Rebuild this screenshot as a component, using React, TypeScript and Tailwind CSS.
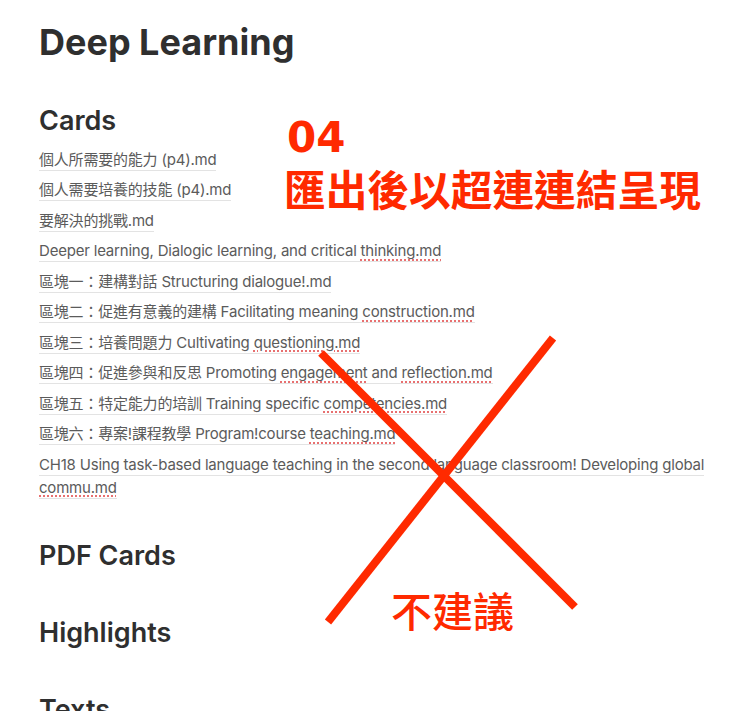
import React from "react";

type Seg = { t: string; s?: boolean };
type Item = Seg[];

const items: Item[] = [
  [{ t: "個人所需要的能力 (p4).md" }],
  [{ t: "個人需要培養的技能 (p4).md" }],
  [{ t: "要解決的挑戰.md" }],
  [{ t: "Deeper learning, Dialogic learning, and critical " }, { t: "thinking.md", s: true }],
  [{ t: "區塊一：建構對話 Structuring dialogue!.md" }],
  [{ t: "區塊二：促進有意義的建構 Facilitating meaning " }, { t: "construction.md", s: true }],
  [{ t: "區塊三：培養問題力 Cultivating " }, { t: "questioning.md", s: true }],
  [
    { t: "區塊四：促進參與和反思 Promoting " },
    { t: "engagement", s: true },
    { t: " and " },
    { t: "reflection.md", s: true },
  ],
  [{ t: "區塊五：特定能力的培訓 Training specific " }, { t: "competencies.md", s: true }],
  [{ t: "區塊六：專案!課程教學 Program!course " }, { t: "teaching.md", s: true }],
  [
    { t: "CH18 Using task-based language teaching in the second language classroom! Developing global " },
    { t: "commu.md", s: true },
  ],
];

const font = { fontFamily: '"Inter", "Noto Sans CJK TC", sans-serif' };

export default function App() {
  return (
    <div
      className="relative w-[740px] h-[711px] overflow-hidden bg-white"
      style={font}
    >
      <div className="pl-[39px] pr-[28px] pt-[19px] text-[#2f2f2f]">
        <h1 className="text-[36px] leading-[46px] font-bold">Deep Learning</h1>
        <h2 className="mt-[39px] text-[27px] leading-[34px] font-semibold">Cards</h2>
        <ul className="mt-[6px] flex flex-col">
          {items.map((it, i) => (
            <li key={i} className="py-[3.75px] text-[15px] leading-[23px] tracking-[-0.2px] text-[#5b5b5b]">
              <span className="border-b border-[#e3e3e3] pb-[1px]">
                {it.map((sg, j) =>
                  sg.s ? (
                    <span
                      key={j}
                      className="underline decoration-dotted decoration-[#e87070] underline-offset-[3px] decoration-[1.5px]"
                    >
                      {sg.t}
                    </span>
                  ) : (
                    <span key={j}>{sg.t}</span>
                  )
                )}
              </span>
            </li>
          ))}
        </ul>
        <h2 className="mt-[36px] text-[27px] leading-[34px] font-semibold">PDF Cards</h2>
        <h2 className="mt-[43px] text-[27px] leading-[34px] font-semibold">Highlights</h2>
        <h2 className="mt-[43px] text-[27px] leading-[34px] font-semibold">Texts</h2>
      </div>

      <div
        className="absolute left-[287px] top-[114px] text-[42px] leading-[48px] font-bold text-[#ff2a00]"
        style={{ fontFamily: '"DejaVu Sans", sans-serif' }}
      >
        04
      </div>
      <div
        className="absolute left-[284px] top-[164px] text-[41.7px] leading-[48px] font-bold text-[#ff2a00] whitespace-nowrap"
        style={{ fontFamily: '"Noto Sans CJK TC", sans-serif' }}
      >
        匯出後以超連連結呈現
      </div>

      <svg className="absolute left-0 top-0" width="740" height="711" viewBox="0 0 740 711">
        <line x1="321" y1="353" x2="575" y2="607" stroke="#ff2a00" strokeWidth="8" />
        <line x1="553" y1="338" x2="328" y2="622" stroke="#ff2a00" strokeWidth="8" />
      </svg>

      <div
        className="absolute left-[391px] top-[585px] text-[41px] leading-[48px] font-medium text-[#ff2a00] whitespace-nowrap"
        style={{ fontFamily: '"Noto Sans CJK TC", sans-serif' }}
      >
        不建議
      </div>
    </div>
  );
}
